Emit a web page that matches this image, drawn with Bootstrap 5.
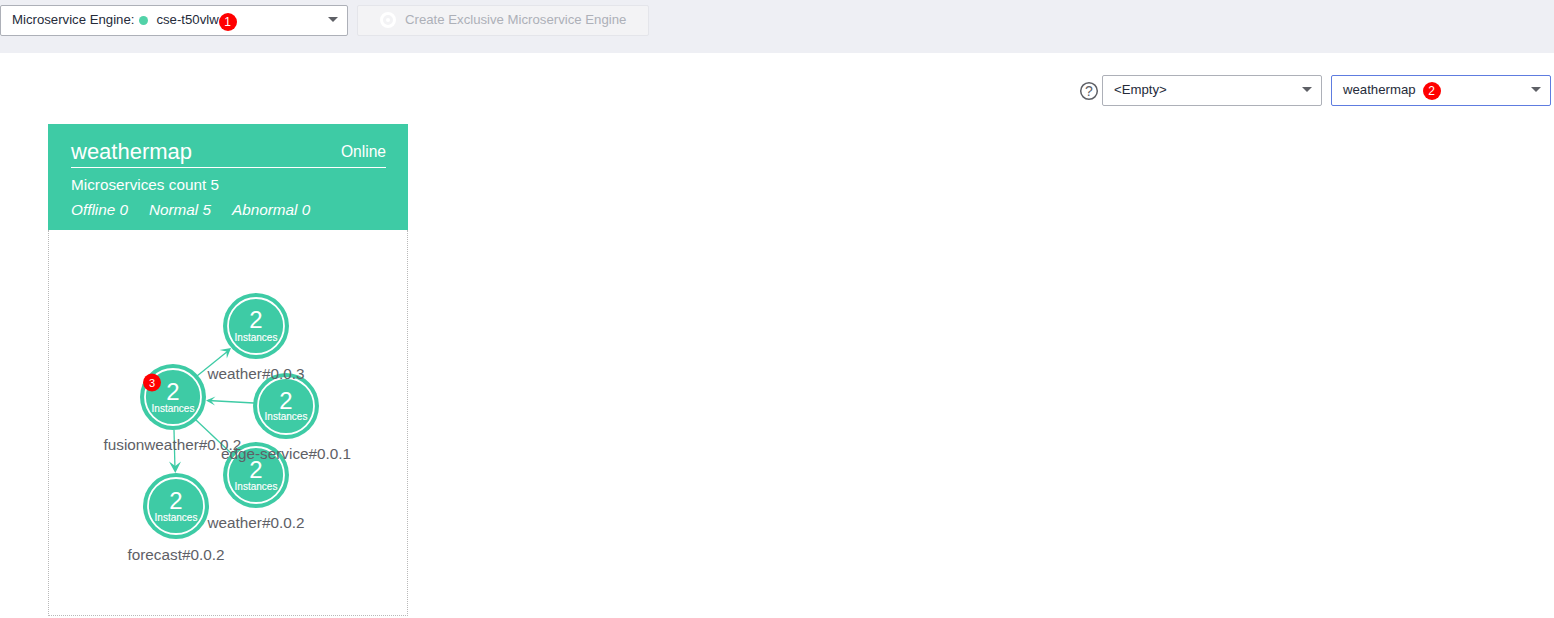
<!DOCTYPE html>
<html lang="en"><head><meta charset="utf-8"><title>Topology</title>
<link href="https://cdn.jsdelivr.net/npm/bootstrap@5.3.0/dist/css/bootstrap.min.css" rel="stylesheet">
<style>
html,body{height:618px;overflow:hidden}
body{font-family:"Liberation Sans",Arial,sans-serif;background:#fff;color:#252b3a;font-size:13.2px}
.top-band{height:53px;background:#eeeff4;padding:5px 0 0 0;gap:9px}
.pick{height:31px;border:1px solid #adb0b8;border-radius:2px;background:#fff;font-size:13.2px;padding:0 8px 2px 11px;color:#252b3a}
.pick-engine{width:348px}
.pick-empty{width:220px}
.pick-map{width:220px;border-color:#5e7ce0;margin-left:9px}
.caret{width:0;height:0;border-left:5px solid transparent;border-right:5px solid transparent;border-top:5px solid #5e6066;margin-left:auto;margin-right:1px}
.dot-on{width:9px;height:9px;border-radius:50%;background:#52d2a8;margin:2px 8px 0 5px}
.num-badge{width:18px;height:18px;border-radius:50%;background:#f00;color:#fff;font-size:12px;line-height:18px;text-align:center;flex:none}
.badge-low{margin-top:5px}
.badge-gap{margin-left:7px;margin-top:2px}
.create-btn.btn{width:292px;height:31px;--bs-btn-disabled-bg:#f3f3f5;--bs-btn-disabled-border-color:#e4e5ea;--bs-btn-disabled-color:#adb0b8;--bs-btn-disabled-opacity:1;--bs-btn-border-radius:2px;--bs-btn-font-size:13.2px;--bs-btn-line-height:1.2;padding:0 0 2px 22px;gap:9px}
.filter-row{padding:22px 3px 0 0;height:71px}
.help-ic{margin:6px 3px 0 0}
.topo-card{width:360px;margin:0 0 0 48px;border:0;border-radius:0;background:transparent}
.topo-head{background:#3ecba5;color:#fff;height:106px;padding:15px 22px 0 23px}
.topo-title{font-size:22px;line-height:26px;font-weight:400}
.topo-status{font-size:15.600px;line-height:26px}
.topo-rule{border-bottom:1px solid #fff;height:29px}
.topo-count{font-size:15.300px;line-height:17px;margin-top:8px}
.topo-stats{font-size:15.300px;line-height:17px;font-style:italic;margin-top:8px;gap:21px}
.topo-body{height:386px;border:1px dotted #b9b9b9;border-top:0}
.topo-svg{display:block}
.lbl{font-family:"Liberation Sans",Arial,sans-serif;font-size:15.300px;fill:#5e6066}
.nd-num{font-family:"Liberation Sans",Arial,sans-serif;font-size:24px;fill:#fff;text-anchor:middle}
.nd-sub{font-family:"Liberation Sans",Arial,sans-serif;font-size:10px;fill:#fff;text-anchor:middle;stroke:#fff;stroke-width:.15px}
.bd-num{font-family:"Liberation Sans",Arial,sans-serif;font-size:11px;fill:#fff;text-anchor:middle}
</style></head>
<body>
<div class="top-band d-flex align-items-start">
  <div class="pick pick-engine d-flex align-items-center"><span>Microservice Engine:</span><span class="dot-on"></span><span>cse-t50vlw</span><span class="num-badge badge-low">1</span><span class="caret"></span></div>
  <button class="create-btn btn d-flex align-items-center" disabled>
    <svg width="16" height="16" viewBox="0 0 16 16"><circle cx="8" cy="8" r="6.500" fill="none" stroke="#fff" stroke-width="3"/><circle cx="8" cy="8" r="2" fill="#fff"/></svg>
    <span>Create Exclusive Microservice Engine</span></button>
</div>
<div class="filter-row d-flex justify-content-end align-items-start">
  <svg class="help-ic" width="20" height="20" viewBox="0 0 20 20"><circle cx="10" cy="10" r="8.300" fill="none" stroke="#5e6066" stroke-width="1.500"/><text x="10" y="15" text-anchor="middle" font-family="Liberation Sans" font-size="14" fill="#5e6066">?</text></svg>
  <div class="pick pick-empty d-flex align-items-center"><span>&lt;Empty&gt;</span><span class="caret"></span></div>
  <div class="pick pick-map d-flex align-items-center"><span>weathermap</span><span class="num-badge badge-gap">2</span><span class="caret"></span></div>
</div>
<div class="topo-card card">
  <div class="topo-head">
    <div class="topo-rule d-flex justify-content-between"><span class="topo-title">weathermap</span><span class="topo-status">Online</span></div>
    <div class="topo-count">Microservices count 5</div>
    <div class="topo-stats d-flex"><span>Offline 0</span><span>Normal 5</span><span>Abnormal 0</span></div>
  </div>
  <div class="topo-body">
    <svg class="topo-svg" width="358" height="385" viewBox="49 230 358 385">
      <g stroke="#3ecba5" stroke-width="1.300" fill="none">
        <line x1="197" y1="376" x2="228" y2="351"/>
        <line x1="254" y1="403" x2="208" y2="400.500"/>
        <line x1="196" y1="420" x2="232" y2="454"/>
        <line x1="174" y1="430" x2="175" y2="470"/>
      </g>
      <g fill="#3ecba5">
        <path d="M231 348 L219.500 350 L226.500 351.500 L226.800 358.500Z"/>
        <path d="M206 400.500 L215.500 396.500 L211 400.700 L215 405.500Z"/>
        <path d="M175.300 473 L169 461.500 L175.300 466 L181 461.500Z"/>
      </g>
      <g fill="#3ecba5">
        <circle cx="256" cy="326" r="33"/><circle cx="173" cy="397" r="33"/><circle cx="286" cy="406" r="33"/><circle cx="256" cy="475" r="33"/><circle cx="176" cy="506" r="33"/>
      </g>
      <g fill="none" stroke="#fff" stroke-width="1.800">
        <circle cx="256" cy="326" r="28"/><circle cx="173" cy="397" r="28"/><circle cx="286" cy="406" r="28"/><circle cx="256" cy="475" r="28"/><circle cx="176" cy="506" r="28"/>
      </g>
      <text class="nd-num" x="256" y="328">2</text><text class="nd-sub" x="256" y="341">Instances</text>
      <text class="nd-num" x="173" y="400">2</text><text class="nd-sub" x="173" y="412">Instances</text>
      <text class="nd-num" x="286" y="409">2</text><text class="nd-sub" x="286" y="420">Instances</text>
      <text class="nd-num" x="256" y="478">2</text><text class="nd-sub" x="256" y="490">Instances</text>
      <text class="nd-num" x="176" y="509">2</text><text class="nd-sub" x="176" y="521">Instances</text>
      <text class="lbl" x="207.500" y="379">weather#0.0.3</text>
      <text class="lbl" x="103.500" y="450">fusionweather#0.0.2</text>
      <text class="lbl" x="221" y="459">edge-service#0.0.1</text>
      <text class="lbl" x="207.500" y="528">weather#0.0.2</text>
      <text class="lbl" x="127.500" y="560">forecast#0.0.2</text>
      <circle cx="152" cy="382.500" r="9" fill="#f00"/><text class="bd-num" x="152" y="386.500">3</text>
    </svg>
  </div>
</div>
<script src="https://cdn.jsdelivr.net/npm/bootstrap@5.3.0/dist/js/bootstrap.bundle.min.js"></script>
</body></html>
